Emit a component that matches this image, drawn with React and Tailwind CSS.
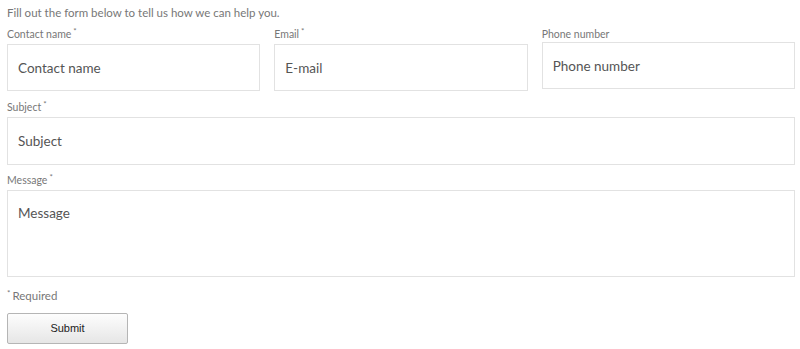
import React from "react";

const font = { fontFamily: "Lato, 'Open Sans', sans-serif" };

function Field({ label, required, placeholder, className = "", h = "h-[47px]" }) {
  return (
    <div className={"flex flex-col " + className}>
      <label
        className={
          "text-[10.5px] leading-[15px] text-[#777] " + (required ? "mb-[2px]" : "mb-0")
        }
      >
        {label}
        {required && <sup className="text-[8px] ml-[2px]">*</sup>}
      </label>
      <input
        className={
          h +
          " w-full border border-[#e2e2e2] bg-white px-[10px] text-[13.5px] text-[#555] placeholder:text-[#555] outline-none"
        }
        placeholder={placeholder}
      />
    </div>
  );
}

export default function App() {
  return (
    <div className="w-[800px] h-[349px] bg-white pl-[7px] pr-[5px]" style={font}>
      <p className="text-[11.5px] leading-[16px] text-[#777] pt-[5px] mb-[6px]">
        Fill out the form below to tell us how we can help you.
      </p>
      <form onSubmit={(e) => e.preventDefault()}>
        <div className="grid grid-cols-3 gap-x-[14px] items-start">
          <Field label="Contact name" required placeholder="Contact name" />
          <Field label="Email" required placeholder="E-mail" />
          <Field label="Phone number" placeholder="Phone number" />
        </div>
        <Field
          label="Subject"
          required
          placeholder="Subject"
          className="mt-[9px]"
          h="h-[48px]"
        />
        <div className="flex flex-col mt-[8px]">
          <label className="text-[10.5px] leading-[15px] text-[#777] mb-[2px]">
            Message
            <sup className="text-[8px] ml-[2px]">*</sup>
          </label>
          <textarea
            className="h-[87px] w-full resize-none border border-[#e2e2e2] bg-white px-[10px] pt-[12px] text-[13.5px] text-[#555] placeholder:text-[#555] outline-none"
            placeholder="Message"
          />
        </div>
        <p className="mt-[11px] text-[11.5px] leading-[16px] text-[#777]">
          <sup className="text-[8px] mr-[2px]">*</sup>Required
        </p>
        <button
          type="submit"
          className="mt-[9px] w-[121px] h-[31px] rounded-[2px] border border-[#b5b5b5] bg-gradient-to-b from-[#fdfdfd] to-[#e6e6e6] text-[11px] text-[#222]"
          style={{ fontFamily: "'Liberation Sans', Arial, sans-serif" }}
        >
          Submit
        </button>
      </form>
    </div>
  );
}
